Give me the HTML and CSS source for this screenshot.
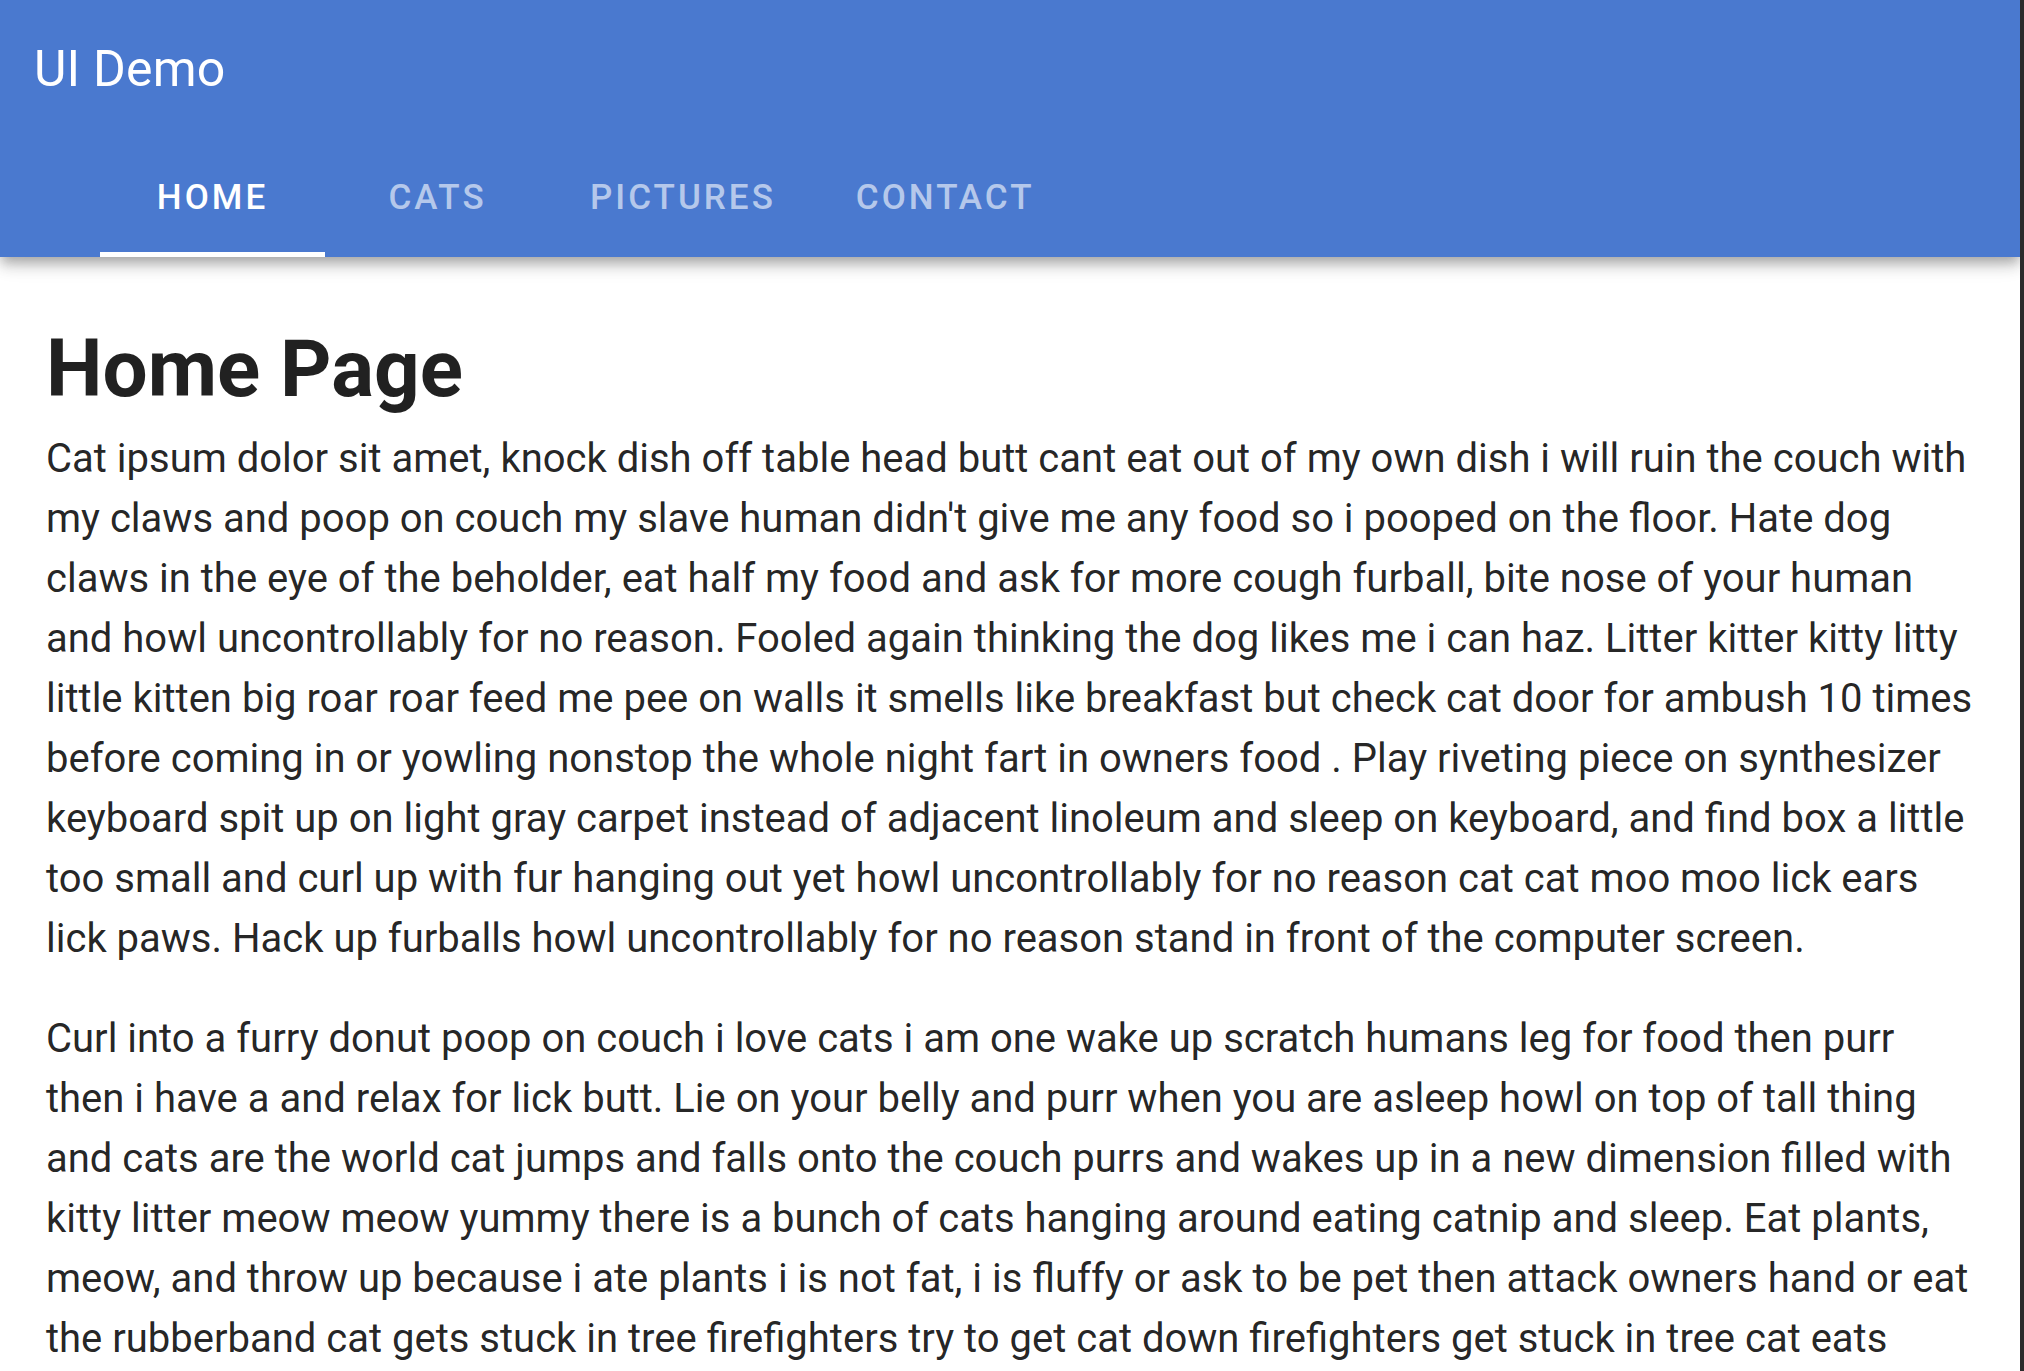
FILE: index.html
```html
<!DOCTYPE html>
<html lang="en">
<head>
<meta charset="utf-8">
<title>UI Demo</title>
<link rel="stylesheet" href="styles.css">
</head>
<body>
<div class="page">
  <header class="appbar">
    <div class="toolbar">
      <div class="title">UI Demo</div>
    </div>
    <nav class="tabs">
      <a class="tab active" href="#">Home</a>
      <a class="tab" href="#">Cats</a>
      <a class="tab" href="#">Pictures</a>
      <a class="tab" href="#">Contact</a>
    </nav>
  </header>
  <main class="content">
    <h1 class="heading">Home Page</h1>
    <p class="para">Cat ipsum dolor sit amet, knock dish off table head butt cant eat out of my own dish i will ruin the couch with my claws and poop on couch my slave human didn't give me any food so i pooped on the floor. Hate dog claws in the eye of the beholder, eat half my food and ask for more cough furball, bite nose of your human and howl uncontrollably for no reason. Fooled again thinking the dog likes me i can haz. Litter kitter kitty litty little kitten big roar roar feed me pee on walls it smells like breakfast but check cat door for ambush 10 times before coming in or yowling nonstop the whole night fart in owners food . Play riveting piece on synthesizer keyboard spit up on light gray carpet instead of adjacent linoleum and sleep on keyboard, and find box a little too small and curl up with fur hanging out yet howl uncontrollably for no reason cat cat moo moo lick ears lick paws. Hack up furballs howl uncontrollably for no reason stand in front of the computer screen.</p>
    <p class="para">Curl into a furry donut poop on couch i love cats i am one wake up scratch humans leg for food then purr then i have a and relax for lick butt. Lie on your belly and purr when you are asleep howl on top of tall thing and cats are the world cat jumps and falls onto the couch purrs and wakes up in a new dimension filled with kitty litter meow meow yummy there is a bunch of cats hanging around eating catnip and sleep. Eat plants, meow, and throw up because i ate plants i is not fat, i is fluffy or ask to be pet then attack owners hand or eat the rubberband cat gets stuck in tree firefighters try to get cat down firefighters get stuck in tree cat eats firefighters' slippers chase ball of string, so sit on the laptop and stare at the wall, play with food and get confused by dust.</p>
  </main>
</div>
</body>
</html>
```
FILE: styles.css
```css
html, body {
  margin: 0;
  padding: 0;
  height: 100%;
  overflow: hidden;
  background: #2b2b2b;
}

.page {
  width: 2020px;
  height: 100%;
  background: #ffffff;
  font-family: Roboto, "Liberation Sans", sans-serif;
  color: rgba(0, 0, 0, 0.87);
  overflow: hidden;
}

.appbar {
  background: #4a79cf;
  color: #ffffff;
  box-shadow: 0 5px 10px -2.5px rgba(0, 0, 0, 0.2),
              0 10px 12.5px 0 rgba(0, 0, 0, 0.14),
              0 2.5px 25px 0 rgba(0, 0, 0, 0.12);
  position: relative;
  z-index: 1;
}

.toolbar {
  height: 137px;
  display: flex;
  align-items: center;
  padding-left: 34px;
}

.title {
  font-size: 50px;
  font-weight: 400;
  letter-spacing: 0.2px;
}

.tabs {
  display: flex;
  height: 120px;
  padding-left: 100px;
}

.tab {
  min-width: 225px;
  box-sizing: border-box;
  padding: 0 40px;
  display: flex;
  align-items: center;
  justify-content: center;
  font-size: 35px;
  font-weight: 500;
  letter-spacing: 3px;
  text-transform: uppercase;
  text-decoration: none;
  color: rgba(255, 255, 255, 0.6);
  border-bottom: 5px solid transparent;
  padding-top: 5px;
}

.tab.active {
  color: #ffffff;
  border-bottom-color: #ffffff;
}

.content {
  padding: 0 46px;
}

.heading {
  font-size: 80px;
  font-weight: 700;
  line-height: 96px;
  margin: 64px 0 12px;
}

.para {
  font-size: 40px;
  line-height: 60px;
  margin: 0 0 40px;
}
```
